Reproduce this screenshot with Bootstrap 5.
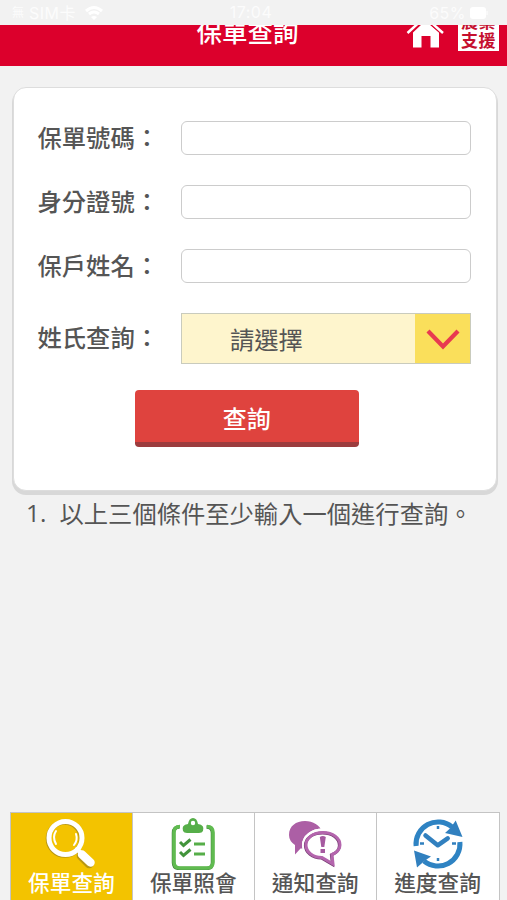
<!DOCTYPE html>
<html lang="zh-TW">
<head>
<meta charset="utf-8">
<meta name="viewport" content="width=device-width, initial-scale=1">
<title>保單查詢</title>
<link href="https://cdn.jsdelivr.net/npm/bootstrap@5.3.0/dist/css/bootstrap.min.css" rel="stylesheet">
<style>
body{background:#f2f2f2;color:#555;font-family:"Noto Sans CJK TC",sans-serif;font-size:24.3px;line-height:1.2}
.screen{height:900px;overflow:hidden}
.status{height:25px;color:#fcfcfc;font:16px/24px Inter,"Noto Sans CJK TC",sans-serif;letter-spacing:.5px;padding:0 19px 0 12px;display:grid;grid-template-columns:1fr auto 1fr}
.status .clock{margin-left:2px}
.topbar{height:41px;background:#dc002c;color:#fff;display:grid;grid-template-columns:1fr auto 1fr;overflow:hidden}
.topbar h1{font-size:25.5px;font-weight:500;line-height:36px;margin:-12px 0 0 -12px}
.tools{padding-right:8px;gap:14px}
.support{width:41px;height:43px;margin-top:-17px;background:#fff;color:#c5102f;font-size:17px;line-height:18.5px;font-weight:700;padding-top:4px;letter-spacing:.4px}
.panel{margin:21px 10px 0 12.5px;height:404px;border:1px solid #ddd;border-radius:13px;box-shadow:0 3px 0 1px #d8d8d8;padding:33px 25px 0 24px}
.query-row{height:34px;margin-bottom:30px}
.query-row label{width:143.5px;flex:none;font-weight:500;white-space:nowrap;margin-top:-3px}
.query-row .form-control{height:34px;min-width:0;border:1.5px solid #ccc;border-radius:6px}
.select-row{height:51px;margin-bottom:26px}
.picker{height:51px;background:#fef5cd;border:1.5px solid #c9cbbd;color:#555}
.picker .choice{padding-left:48px}
.picker .arrow{width:55px;background:#fadf5b}
.submit,.submit:hover{background:#df433e;border-color:#9c3c3e}
.submit{width:224px;height:57px;border-bottom:5px solid #9c3c3e;border-radius:4px;font-size:24px;font-weight:500;margin-left:-15px;line-height:1}
.submit span{display:block;padding-top:4px}
.notice{margin:5px 0 0 26px;line-height:34px}
.notice span:first-child{width:33.5px;font-family:"Open Sans","Noto Sans CJK TC",sans-serif}
.tabs{margin:0 7.5px 0 10px;height:88px;background:#fff;border:1px solid #c4c4c4;border-bottom:0}
.tabs a{color:#555;font-size:21.7px;font-weight:500;line-height:26px;padding-top:5px;border-right:1px solid #c4c4c4;width:25%}
.tabs a:last-child{border:0}
.tabs a.active{background:#f3c300;color:#fff}
.tabs svg{display:block;margin-bottom:-1px;flex:none}
</style>
<script src="https://cdn.jsdelivr.net/npm/bootstrap@5.3.0/dist/js/bootstrap.bundle.min.js"></script>
</head>
<body>
<div class="screen d-flex flex-column">
  <div class="status">
    <div class="d-flex align-items-center"><span style="width:17px;font-size:12px">無</span><span>SIM卡</span>
      <svg class="ms-2" width="20" height="16" viewBox="0 0 20 16" fill="none" stroke="#fff" stroke-width="3"><path d="M2 6q8-7 16 0M5 9q5-4 10 0"/><path d="M7 12q3-2 6 0l-3 3z" fill="#fff" stroke="none"/></svg></div>
    <div class="clock">17:04</div>
    <div class="d-flex justify-content-end align-items-center"><span>65%</span><svg class="ms-1" width="18" height="12"><rect width="16" height="12" rx="3" fill="#fff"/><path d="M17 4v4" stroke="#fff"/></svg></div>
  </div>
  <header class="topbar">
    <span></span>
    <h1>保單查詢</h1>
    <div class="tools d-flex justify-content-end">
      <svg width="38" height="24" viewBox="0 0 38 24" fill="#fff"><path d="M7 7.500 16-1H23L33 7.500V22.500H24.500V11H15.500V22.500H7z"/><path d="M1.500 8 19-8 37 8" fill="none" stroke="#dc002c" stroke-width="4.500"/><path d="M1.500 8 19-8 37 8" fill="none" stroke="#fff" stroke-width="2.500"/></svg>
      <div class="support text-center">農業<br>支援</div>
    </div>
  </header>
  <main class="flex-grow-1">
    <form class="panel bg-white">
      <div class="query-row d-flex align-items-center"><label for="policy">保單號碼：</label><input class="form-control flex-fill" id="policy"></div>
      <div class="query-row d-flex align-items-center"><label for="ident">身分證號：</label><input class="form-control flex-fill" id="ident"></div>
      <div class="query-row d-flex align-items-center"><label for="holder">保戶姓名：</label><input class="form-control flex-fill" id="holder"></div>
      <div class="query-row select-row d-flex align-items-center"><label>姓氏查詢：</label>
        <div class="picker flex-fill d-flex align-items-stretch" role="button"><span class="choice flex-fill d-flex align-items-center">請選擇</span>
          <span class="arrow d-flex align-items-center justify-content-center"><svg width="34" height="22" viewBox="0 0 34 22"><path d="M2 3 17 18.500 32 3" fill="none" stroke="#e83a50" stroke-width="4.200"/></svg></span></div></div>
      <div class="text-center"><button type="button" class="btn submit text-white border-start-0 border-end-0 border-top-0 p-0"><span>查詢</span></button></div>
    </form>
    <div class="notice d-flex"><span>1.</span><span>以上三個條件至少輸入一個進行查詢。</span></div>
  </main>
  <nav class="tabs d-flex">
    <a href="#" class="active d-flex flex-column align-items-center text-decoration-none">
      <svg width="52" height="52" viewBox="0 0 52 52" fill="none" stroke-linecap="round"><g stroke="#927a20" opacity=".6" transform="translate(-.8 .8)"><circle cx="20.500" cy="20" r="16.500" stroke-width="5"/><path d="m37 37 8 8" stroke-width="9"/></g><g stroke="#fff"><circle cx="20.500" cy="20" r="16.500" stroke-width="5"/><path d="m32 31 4 4" stroke-width="4"/><path d="m37 36.500 8.500 8" stroke-width="8.500"/><path d="M11 13q-4 6 0 13M29 27q4-5 2-11" stroke-width="2"/></g></svg>保單查詢</a>
    <a href="#" class="d-flex flex-column align-items-center text-decoration-none">
      <svg width="44" height="52" viewBox="0 0 44 52" fill="none"><path d="M9 8.500q-6 0-6 6V44q0 6 6 6h27q6 0 6-6V14.500q0-6-6-6" stroke="#43843e" stroke-width="3.500" transform="translate(-.5 .4)"/><path d="M9 8.500q-6 0-6 6V44q0 6 6 6h27q6 0 6-6V14.500q0-6-6-6" stroke="#60bb50" stroke-width="3.500"/><path fill-rule="evenodd" fill="#56ae49" d="M12 13q-2-6 5-7 1-6 5-6t5 6q7 1 5 7-1 2-4 2H16q-3 0-4-2zM22 2.800a2.200 2.200 0 1 0 0 4.400 2.200 2.200 0 0 0 0-4.400"/><path d="m9 24 3.500 3.500 7-6M9 34l3.500 3.500 7-6" stroke="#43943c" stroke-width="3"/><path d="M23 26h11M23 36h11" stroke="#56ae49" stroke-width="3"/></svg>保單照會</a>
    <a href="#" class="d-flex flex-column align-items-center text-decoration-none">
      <svg width="54" height="52" viewBox="0 0 54 52"><path fill="#ac5fa5" d="M17 3C8 3 1 8 1 17q0 6 6 10v9.500l5.500-6H20L34 14C32 7 25 3 17 3"/><path id="bubble" d="M35 14.500c-10 0-17 5.500-17 12.500s7 12.500 16 12.500l11 6.500-1-9.500c5-2 8-5.500 8-9.500 0-7-7-12.500-17-12.500z" fill="#fff" stroke="#fff" stroke-width="8"/><use href="#bubble" style="stroke-width:3"/><path d="M35 14.500c-10 0-17 5.500-17 12.500s7 12.500 16 12.500l11 6.500-1-9.500c5-2 8-5.500 8-9.500 0-7-7-12.500-17-12.500z" fill="none" stroke="#793f75" stroke-width="3" transform="translate(-.6 .5)"/><path d="M35 14.500c-10 0-17 5.500-17 12.500s7 12.500 16 12.500l11 6.500-1-9.500c5-2 8-5.500 8-9.500 0-7-7-12.500-17-12.500z" fill="none" stroke="#b465ad" stroke-width="3"/><path d="M31.800 19q3-2 6 0l-1.500 10h-3zM32.500 31h4.500v4h-4.500z" fill="#a65aa0"/></svg>通知查詢</a>
    <a href="#" class="d-flex flex-column align-items-center text-decoration-none">
      <svg width="52" height="52" viewBox="0 0 52 52" fill="none"><g stroke="#2e83c3" stroke-width="5"><path d="M4.100 28A22 22 0 0 1 40 9M47.900 24A22 22 0 0 1 12 43"/></g><path fill="#3180bf" d="m43.700 2.500 6.800 16.500-17.500-4 5.500-5zM2 32.500l17 6-6 4-8 7z"/><path d="m13.500 17.500 12.200 9.800 10-7" stroke="#3180bf" stroke-width="4.500" stroke-linecap="round" stroke-linejoin="round"/><path d="M26 8v3M26 40v3M8 25.500h4M40 25.500h4" stroke="#3180bf" stroke-width="2.500"/></svg>進度查詢</a>
  </nav>
</div>
</body>
</html>
